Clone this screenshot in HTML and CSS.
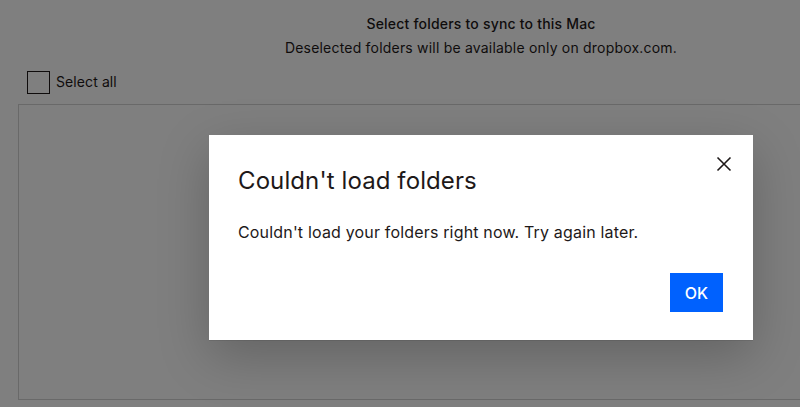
FILE: index.html
```html
<!DOCTYPE html>
<html lang="en">
<head>
<meta charset="utf-8">
<title>Select folders</title>
<link rel="stylesheet" href="styles.css">
</head>
<body>
<div class="viewport">
<div class="app">
  <header class="head">
    <div class="head-title">Select folders to sync to this Mac</div>
    <div class="head-sub">Deselected folders will be available only on dropbox.com.</div>
  </header>
  <div class="content">
    <label class="select-all">
      <span class="checkbox"></span>
      <span>Select all</span>
    </label>
    <div class="folder-box"></div>
  </div>

  <div class="overlay">
    <div class="modal" role="dialog">
      <button class="close" aria-label="Close">
        <svg width="16" height="16" viewBox="0 0 16 16"><path d="M1.5 1.5 L14.5 14.5 M14.5 1.5 L1.5 14.5" stroke="#1e1919" stroke-width="1.6" fill="none"/></svg>
      </button>
      <h2 class="modal-title">Couldn't load folders</h2>
      <p class="modal-body">Couldn't load your folders right now. Try again later.</p>
      <div class="modal-actions">
        <button class="ok">OK</button>
      </div>
    </div>
  </div>
</div>
</div>
</body>
</html>
```

FILE: styles.css
```css
html, body {
  margin: 0;
  padding: 0;
  overflow: hidden;
  background: #ffffff;
}
body {
  font-family: Inter, "Noto Sans", sans-serif;
  color: #1e1919;
}
.viewport {
  width: 800px;
  height: 407px;
  overflow: hidden;
  position: relative;
}
.app {
  position: relative;
  width: 962px;
  height: 475px;
  background: #ffffff;
}
.head {
  padding-top: 12px;
  text-align: center;
  font-size: 14px;
  line-height: 24px;
  letter-spacing: 0.2px;
}
.head-title {
  font-weight: 500;
}
.content {
  padding: 10px 18px 0 18px;
}
.select-all {
  display: flex;
  align-items: center;
  gap: 6px;
  padding-left: 9px;
  height: 24px;
  font-size: 14px;
  line-height: 20px;
  letter-spacing: 0.1px;
}
.checkbox {
  width: 21px;
  height: 21px;
  border: 1.5px solid #1e1919;
  box-sizing: content-box;
  display: block;
}
.folder-box {
  margin-top: 10px;
  height: 294px;
  border: 1px solid #d3d3d3;
}
.overlay {
  position: absolute;
  inset: 0;
  background: rgba(0, 0, 0, 0.5);
  display: flex;
  align-items: center;
  justify-content: center;
}
.modal {
  position: relative;
  width: 544px;
  height: 205px;
  box-sizing: border-box;
  background: #ffffff;
  padding: 30px 30px 28px 29px;
  box-shadow: 0 16px 48px rgba(0, 0, 0, 0.22), 0 1px 0 rgba(0,0,0,0.08);
  display: flex;
  flex-direction: column;
}
.close {
  position: absolute;
  top: 21px;
  right: 21px;
  width: 16px;
  height: 16px;
  padding: 0;
  border: 0;
  background: none;
  display: block;
}
.close svg {
  display: block;
}
.modal-title {
  margin: 0;
  font-size: 24px;
  line-height: 32px;
  font-weight: 400;
  letter-spacing: 0.1px;
}
.modal-body {
  margin: 23px 0 0 0;
  font-size: 16px;
  line-height: 24px;
  letter-spacing: 0.17px;
}
.modal-actions {
  margin-top: auto;
  display: flex;
  justify-content: flex-end;
}
.ok {
  height: 39px;
  padding: 0 15px;
  min-width: 53px;
  border: 0;
  background: #0061fe;
  color: #ffffff;
  font-family: Inter, "Noto Sans", sans-serif;
  font-size: 16px;
  font-weight: 500;
}
```
